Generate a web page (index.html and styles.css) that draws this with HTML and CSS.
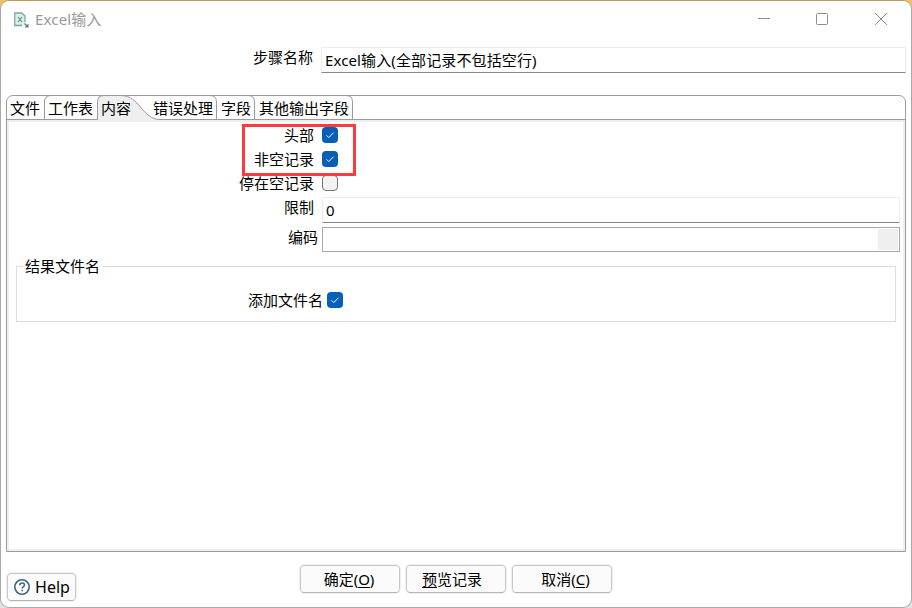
FILE: index.html
```html
<!DOCTYPE html>
<html lang="zh-CN">
<head>
<meta charset="utf-8">
<title>Excel输入</title>
<link rel="stylesheet" href="styles.css">
</head>
<body>
<div class="window">
  <header class="titlebar">
    <svg class="app-icon" width="16" height="17" viewBox="0 0 16 17">
      <path d="M1.5 1.5h7l2.5 2.5v9.5h-9.5z" fill="#d9f0de"/>
      <path d="M8 1H.8v12.5H8M8 1l3 3v6" fill="none" stroke="#7f9fae" stroke-width="1.3"/>
      <path d="M4 5l4 5M8 5l-4 5" stroke="#5b8494" stroke-width="1.1"/>
      <path d="M10.5 11.5l3 3" stroke="#517b91" stroke-width="1.3"/>
      <path d="M14.5 11.5v4h-4z" fill="#517b91"/>
    </svg>
    <span class="title">Excel输入</span>
    <svg class="controls" width="130" height="14" viewBox="0 0 130 14" fill="none" stroke="#8c8c8c">
      <path d="M0 6.5h12"/>
      <rect x="58.5" y="1.5" width="11" height="11" rx="1"/>
      <path d="M117 1l12 12M129 1l-12 12"/>
    </svg>
  </header>

  <div class="step">
    <label class="step-label">步骤名称</label>
    <div class="field step-field">Excel输入(全部记录不包括空行)</div>
  </div>

  <main class="folder">
    <nav class="tabs">
      <svg class="tab-lines" width="360" height="27" viewBox="0 0 360 27" fill="none" stroke="#9b9b9b">
        <path d="M91.5 27V7Q91.500 .5 98 .5H115C134 .5 136 24.500 154 24.500V27z" fill="#efefef" stroke="none"/>
        <path d="M38.500 24V7Q38.500 .5 45 .5"/>
        <path d="M91.500 25V7Q91.500 .5 98 .5H115C134 .5 136 24.500 154 24.500"/>
        <path d="M0 24.500H91.500M154 24.500H360"/>
        <path d="M204 .5Q210.500 .5 210.500 7V24M242 .5Q248.500 .5 248.500 7V24M340 .5Q346.500 .5 346.500 7V24"/>
      </svg>
      <span class="tab tab-file">文件</span>
      <span class="tab tab-sheet">工作表</span>
      <span class="tab tab-content">内容</span>
      <span class="tab tab-error">错误处理</span>
      <span class="tab tab-fields">字段</span>
      <span class="tab">其他输出字段</span>
    </nav>
    <section class="pane">
      <div class="row"><label>头部</label><span class="check on"><svg width="16" height="16" viewBox="0 0 16 16"><path d="M4.500 8.300l2.300 2.300 4.700-4.900"/></svg></span></div>
      <div class="row"><label>非空记录</label><span class="check on"><svg width="16" height="16" viewBox="0 0 16 16"><path d="M4.500 8.300l2.300 2.300 4.700-4.900"/></svg></span></div>
      <div class="row"><label>停在空记录</label><span class="check"></span></div>
      <div class="row limit-row"><label>限制</label><div class="field">0</div></div>
      <div class="row encoding-row"><label>编码</label><div class="combo"><span class="combo-button"></span></div></div>
      <fieldset class="group">
        <legend>结果文件名</legend>
        <div class="row add-row"><label>添加文件名</label><span class="check on"><svg width="16" height="16" viewBox="0 0 16 16"><path d="M4.500 8.300l2.300 2.300 4.700-4.900"/></svg></span></div>
      </fieldset>
      <div class="highlight"></div>
    </section>
  </main>

  <footer class="footer">
    <button class="button help"><svg width="18" height="18" viewBox="0 0 18 18" fill="none" stroke="#3d6585"><circle cx="9" cy="9" r="7.200" stroke-width="1.600"/><path d="M6.700 7.200c0-3 4.800-3 4.800-.2 0 1.700-2.300 1.600-2.300 3.500M9.200 11.700v1.500" stroke-width="1.500"/></svg>Help</button>
    <button class="button ok">确定(<u>O</u>)</button>
    <button class="button preview"><u>预</u>览记录</button>
    <button class="button cancel">取消(<u>C</u>)</button>
  </footer>
</div>
</body>
</html>
```
FILE: styles.css
```css
* { box-sizing: border-box; }

body {
  margin: 0;
  height: 608px;
  overflow: hidden;
  background: linear-gradient(#f0c068 25px, #e3e3e3 25px);
  color: #000;
  font: 15px/20px "Noto Sans", "Noto Sans CJK SC", sans-serif;
}

.window {
  display: flex;
  flex-direction: column;
  height: 608px;
  padding: 0 5px;
  border: 1px solid #aaa;
  border-top-color: #bd9c61;
  border-radius: 9px;
  background: #fff;
}

.titlebar {
  display: flex;
  height: 46px;
  padding: 11px 18px 0 8px;
}
.app-icon { flex: none; }
.title {
  margin: -3px 0 0 5px;
  color: #999;
  letter-spacing: .15px;
}
.controls { margin-left: auto; }

.step { display: flex; height: 48px; }
.step-label {
  width: 307px;
  margin-right: 8px;
  text-align: right;
}
.field {
  flex: 1;
  height: 26px;
  padding: 2px 3px 0;
  border: 1px solid #ececec;
  border-bottom-color: #898989;
  border-radius: 1px;
}
.step-field { letter-spacing: .12px; }

.folder {
  display: flex;
  flex-direction: column;
  height: 457px;
  border: 1px solid #9b9b9b;
  border-radius: 7px 7px 0 0;
}
.tabs {
  position: relative;
  display: flex;
  flex: none;
  height: 24px;
  padding: 2px 0 0 3px;
  border-bottom: 1px solid #9b9b9b;
  white-space: nowrap;
}
.tab-lines { position: absolute; left: -1px; top: -1px; }
.tab { position: relative; }
.tab-file { width: 38px; }
.tab-sheet { width: 53px; }
.tab-content { width: 52px; }
.tab-error { width: 68px; }
.tab-fields { width: 38px; }

.pane {
  position: relative;
  flex: 1;
  padding: 3px 3px 0 7px;
  border: 2px solid #efefef;
}
.row { display: flex; height: 24px; }
.row label {
  width: 298px;
  margin-right: 8px;
  text-align: right;
}
.check {
  flex: none;
  width: 16px;
  height: 16px;
  margin-top: 2px;
  border: 1px solid #757575;
  border-radius: 4px;
  background: #f3f3f3;
}
.check.on { border: 0; background: #0560b6; }
.check svg { display: block; fill: none; stroke: #fff; }

.limit-row { height: 30px; }
.encoding-row label { width: 302px; margin-right: 4px; }
.combo {
  display: flex;
  flex: 1;
  justify-content: flex-end;
  height: 25px;
  padding: 1px;
  border: 1px solid #a8a8a8;
}
.combo-button { width: 20px; background: #efefef; }

.group {
  height: 66px;
  margin: 5px 4px 0 0;
  padding: 0;
  border: 1px solid #dcdcdc;
}
.group legend {
  margin-left: 6px;
  padding: 0 2px;
}
.add-row { margin-top: 14px; }
.add-row label { width: 306px; margin-right: 4px; }

.highlight {
  position: absolute;
  left: 233px;
  top: 2px;
  width: 114px;
  height: 52px;
  border: 3px solid #f83c40;
}

.footer { display: flex; padding-top: 13px; }
.button {
  display: flex;
  align-items: center;
  justify-content: center;
  width: 100px;
  height: 28px;
  margin: 0 6px 0 0;
  padding: 0 0 0 1px;
  border: 1px solid #c8c8c8;
  border-bottom-color: #b5b5b5;
  border-radius: 4px;
  outline: 1px solid #f0f0f0;
  background: #fbfbfb;
  color: inherit;
  font: inherit;
}
.button u { text-underline-offset: 2px; }
.ok { padding: 0 2px 0 0; }
.preview { padding: 0 8px 0 0; }
.cancel { padding: 0 0 0 7px; }
.help {
  gap: 4px;
  width: 69px;
  margin: 8px 224px 0 1px;
  padding: 0;
  font-size: 16px;
}
```
